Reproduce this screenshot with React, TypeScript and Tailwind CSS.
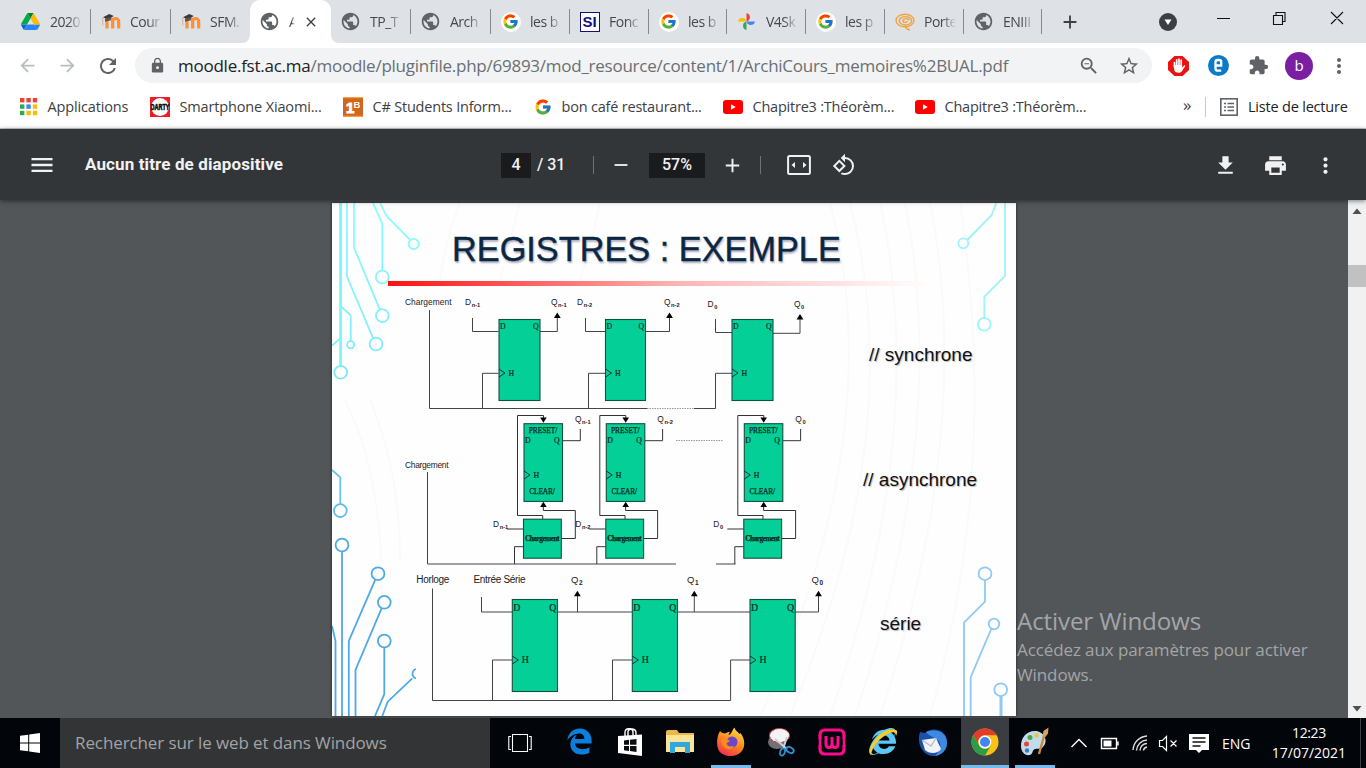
import React from "react";
import {
  MdAdd, MdArrowBack, MdArrowForward, MdClose, MdExtension, MdFileDownload, MdLock, MdMenu,
  MdMoreVert, MdPrint, MdPublic, MdRefresh, MdRemove, MdRotate90DegreesCcw, MdStarBorder, MdZoomOut,
} from "react-icons/md";
import { FcGoogle } from "react-icons/fc";
import { FaEdgeLegacy, FaInternetExplorer } from "react-icons/fa6";

const UI = "font-['Open_Sans','Noto_Sans',sans-serif]";

/* ---------- small drawings ---------- */

const Drive = () => (
  <svg width="19" height="17" viewBox="0 0 87.3 78">
    <path d="m6.6 66.85 3.85 6.65c.8 1.4 1.95 2.5 3.3 3.3l13.75-23.8h-27.5c0 1.55.4 3.1 1.2 4.5z" fill="#0066da" />
    <path d="m43.65 25-13.75-23.8c-1.35.8-2.5 1.9-3.3 3.3l-25.4 44a9.06 9.06 0 0 0 -1.2 4.5h27.5z" fill="#00ac47" />
    <path d="m73.55 76.8c1.35-.8 2.5-1.9 3.3-3.3l1.6-2.75 7.65-13.25c.8-1.4 1.2-2.95 1.2-4.5h-27.5l5.85 11.5z" fill="#2684fc" />
    <path d="m43.65 25 13.75-23.8c-1.35-.8-2.9-1.2-4.5-1.2h-18.5c-1.6 0-3.15.45-4.5 1.2z" fill="#00832d" />
    <path d="m59.8 53h-32.3l-13.75 23.8c1.35.8 2.9 1.2 4.5 1.2h50.8c1.6 0 3.15-.45 4.5-1.2z" fill="#2684fc" />
    <path d="m73.4 26.5-12.7-22c-.8-1.4-1.95-2.5-3.3-3.3l-13.75 23.8 16.15 28h27.45c0-1.55-.4-3.1-1.2-4.5z" fill="#ffba00" />
  </svg>
);
const Moodle = () => (
  <svg width="20" height="18" viewBox="0 0 20 18">
    <path d="M6 15.500V8.500a2.800 2.800 0 0 1 5.700 0V15.500M11.700 8.500a2.900 2.900 0 0 1 6 0V15.500" fill="none" stroke="#f7923a" strokeWidth="3.200" />
    <path d="M2 4.200 8.200 1l4.600 2-6 3.600z" fill="#3d3a38" />
    <path d="M4 5.500v3.200c2-.6 4-.8 5.600-1.400l.6-3z" fill="#5b5450" />
    <path d="M1.700 4.300v8" stroke="#c9b2a0" strokeWidth="1" />
  </svg>
);
const Globe = () => <MdPublic size={21} color="#5f6368" />;
const GoogleDisc = () => (
  <span className="flex h-5 w-5 items-center justify-center rounded-full bg-white"><FcGoogle size={17} /></span>
);
const SiLogo = () => (
  <span className="flex h-5 w-5 shrink-0 items-center justify-center border-[1.5px] border-[#12127a] bg-white">
    <span className="font-['Liberation_Sans',sans-serif] text-[15px] font-bold leading-none text-[#12127a]">SI</span>
  </span>
);
const Photos = () => (
  <svg width="19" height="19" viewBox="0 0 20 20">
    <path d="M10 10V1a5 4.7 0 0 1 0 9z" fill="#ea4335" /><path d="M10 10h9a4.6 4.6 0 0 1-9 0z" fill="#4285f4" />
    <path d="M10 10v9a4.6 4.6 0 0 1 0-9z" fill="#34a853" /><path d="M10 10H1a4.6 4.6 0 0 1 9 0z" fill="#fbbc04" />
  </svg>
);
const Swirl = () => (
  <svg width="20" height="18" viewBox="0 0 20 18" fill="none" stroke="#f2a33c" strokeWidth="1.4">
    <ellipse cx="10" cy="7.5" rx="9" ry="6.3" /><ellipse cx="10.5" cy="7.8" rx="6.2" ry="4.2" />
    <path d="M14 7.5c0-2.5-6-2.6-6 .4 0 2 4 2 4 .2M10 13.5c1 2.5 3 3 5 3.500" />
  </svg>
);
const YouTube = () => (
  <svg width="20" height="14" viewBox="0 0 20 14"><rect width="20" height="14" rx="3" fill="#f00" /><path d="M8 4.2v5.600L12.700 7z" fill="#fff" /></svg>
);

/* ---------- tabs ---------- */

const tabs: { icon: React.ReactNode; label: string; w: string; active?: boolean; bar?: boolean }[] = [
  { icon: <Drive />, label: "2020", w: "w-[80px]", bar: true },
  { icon: <Moodle />, label: "Cour", w: "w-[80px]", bar: true },
  { icon: <Moodle />, label: "SFM.", w: "w-[79px]" },
  { icon: <Globe />, label: "A", w: "w-[81px]", active: true },
  { icon: <Globe />, label: "TP_T", w: "w-[80px]", bar: true },
  { icon: <Globe />, label: "Arch", w: "w-[80px]", bar: true },
  { icon: <GoogleDisc />, label: "les b", w: "w-[79px]", bar: true },
  { icon: <SiLogo />, label: "Fonc", w: "w-[79px]", bar: true },
  { icon: <GoogleDisc />, label: "les b", w: "w-[78px]", bar: true },
  { icon: <Photos />, label: "V4Sk", w: "w-[79px]", bar: true },
  { icon: <GoogleDisc />, label: "les p", w: "w-[79px]", bar: true },
  { icon: <Swirl />, label: "Porte", w: "w-[79px]", bar: true },
  { icon: <Globe />, label: "ENIII", w: "w-[78px]", bar: true },
];

const Tabs = () => (
  <div className="flex h-[43px] items-end bg-[#dee1e6] pl-[11px]">
    {tabs.map((t, i) => (
      <div
        key={i}
        className={`relative flex h-[43px] shrink-0 items-center pl-[9px] ${t.w} ${t.active ? "rounded-t-[10px] bg-white" : ""}`}
      >
        <span className="flex w-[21px] shrink-0 justify-center">{t.icon}</span>
        <span
          className={`ml-[9px] whitespace-nowrap text-[14px] tracking-[-0.5px] text-[#45494d] ${t.active ? "w-[9px] [mask-image:linear-gradient(to_right,#000_30%,transparent_65%)]" : "w-[33px] [mask-image:linear-gradient(to_right,#000_55%,transparent_98%)]"}`}
        >
          {t.label}
        </span>
        {t.active && <MdClose size={16} className="ml-[5px] shrink-0 text-[#3c4043]" />}
        {t.bar && <span className="ml-auto h-[25px] w-px bg-[#85898e]" />}
        {t.active && (
          <svg className="absolute -left-2 bottom-0 h-2 w-[97px]" viewBox="0 0 97 8" fill="#fff">
            <path d="M0 8A8 8 0 0 0 8 0V8zM97 8A8 8 0 0 1 89 0V8z" />
          </svg>
        )}
      </div>
    ))}
    <div className="flex h-[43px] flex-1 items-center">
      <MdAdd size={22} className="ml-[17px] text-[#3c4043]" />
      <svg className="ml-[78px]" width="18" height="18" viewBox="0 0 18 18"><circle cx="9" cy="9" r="9" fill="#3c4043" /><path d="M5.500 6.500h7L9 12z" fill="#fff" /></svg>
      <svg className="mb-[8px] ml-[39px]" width="130" height="14" viewBox="0 0 130 14" fill="none" stroke="#111" strokeWidth="1.100">
        <path d="M1 7.500h13M57.500 4.500h9v9h-9zM60 4V1.500h9v9h-2.500M115 1l12 12M127 1l-12 12" />
      </svg>
    </div>
  </div>
);

/* ---------- address bar and bookmarks ---------- */

const Toolbar = () => (
  <div className="flex h-[45px] items-center bg-white">
    <MdArrowBack size={21} className="ml-[17px] text-[#b9bcbf]" />
    <MdArrowForward size={21} className="ml-[19px] text-[#b9bcbf]" />
    <MdRefresh size={24} className="ml-[18px] text-[#5f6368]" />
    <div className="ml-[15px] flex h-[35px] w-[1017px] items-center rounded-full bg-[#f1f3f4]">
      <MdLock size={17} className="ml-[14px] shrink-0 text-[#5f6368]" />
      <span className="ml-[12px] w-[860px] whitespace-nowrap text-[17px] tracking-[-0.25px] text-[#6b6f73]">
        <span className="text-[#202124]">moodle.fst.ac.ma</span>
        /moodle/pluginfile.php/69893/mod_resource/content/1/ArchiCours_memoires%2BUAL.pdf
      </span>
      <MdZoomOut size={22} className="ml-[40px] shrink-0 text-[#5f6368]" />
      <MdStarBorder size={22} className="ml-[18px] shrink-0 text-[#5f6368]" />
    </div>
    <svg className="ml-[16px]" width="21" height="20" viewBox="0 0 21 20">
      <path d="M6.500 0h8L21 6v8l-6.500 6h-8L0 14V6z" fill="#ed1212" />
      <path d="M6.500 11V6.500M8.700 10V3.800M11 10V3.200M13.200 10V4.200" stroke="#fff" strokeWidth="1.700" strokeLinecap="round" />
      <path d="M5.700 9h8.400v2.500l2-2c.9-.5 1.300.3.9.9l-3.300 5.100c-1.300 1.700-6 1.700-7.200-.5z" fill="#fff" />
    </svg>
    <svg className="ml-[19px]" width="21" height="21" viewBox="0 0 21 21">
      <circle cx="10.500" cy="10.500" r="10.500" fill="#0d7ac7" />
      <path d="M8.200 10.500h5V6.700c0-1.200-.8-1.700-2-1.700H9.800C8.400 5 7.500 5.600 7.500 7v6.500c0 1.500 1 2.200 2.300 2.200h3.400" fill="none" stroke="#fff" strokeWidth="2.300" />
    </svg>
    <MdExtension size={21} className="ml-[19px] text-[#5f6368]" />
    <span className="ml-[16px] flex h-7 w-7 items-center justify-center rounded-full bg-[#7b1fa2] pb-px text-[15px] text-white">b</span>
    <MdMoreVert size={24} className="ml-[14px] text-[#5f6368]" />
  </div>
);

const dots = ["#ea4335", "#ea4335", "#ea4335", "#34a853", "#4285f4", "#fbbc04", "#34a853", "#fbbc04", "#fbbc04"];

const Bookmark = ({ icon, label, w, track }: { icon: React.ReactNode; label: string; w: string; track: string }) => (
  <div className={`flex shrink-0 items-center gap-[9.5px] whitespace-nowrap ${w}`}>
    {icon}
    <span className={track}>{label}</span>
  </div>
);

const Bookmarks = () => (
  <div className="flex h-[41px] items-center border-b border-[#c9ccd0] bg-white pb-[3px] pl-5 text-[14.5px] text-[#3c4043]">
    <Bookmark
      w="w-[130px]"
      track="tracking-[-0.15px]"
      label="Applications"
      icon={
        <svg width="18" height="18" viewBox="0 0 18 18">
          {dots.map((c, i) => <rect key={i} x={(i % 3) * 6.400} y={Math.floor(i / 3) * 6.400} width="4.400" height="4.400" fill={c} />)}
        </svg>
      }
    />
    <Bookmark
      w="w-[193px]"
      track="tracking-[-0.15px]"
      label="Smartphone Xiaomi..."
      icon={
        <svg width="20" height="20" viewBox="0 0 20 20">
          <rect width="20" height="20" fill="#ee1c24" /><circle cx="10" cy="10" r="9" fill="#fff" />
          <text x="0.500" y="13.200" textLength="19" lengthAdjust="spacingAndGlyphs" fontFamily="Liberation Sans" fontWeight="bold" fontSize="8.500" stroke="#111" strokeWidth=".6">DARTY</text>
        </svg>
      }
    />
    <Bookmark
      w="w-[191px]"
      track="tracking-[-0.2px]"
      label="C# Students Inform..."
      icon={
        <svg width="20" height="20" viewBox="0 0 20 20">
          <rect width="20" height="20" fill="#d4651c" /><path d="M0 .6h20M0 19.400h20" stroke="#f0a040" strokeWidth="1.200" />
          <text x="3" y="16" fontFamily="Liberation Sans" fontWeight="bold" fontSize="15" fill="#fff" stroke="#fff" strokeWidth="1">1</text>
          <text x="10.500" y="10.500" fontFamily="Liberation Sans" fontWeight="bold" fontSize="9.500" fill="#fff">B</text>
        </svg>
      }
    />
    <Bookmark w="w-[189px]" track="tracking-[-0.2px]" label="bon café restaurant..." icon={<FcGoogle size={18} />} />
    <Bookmark w="w-[192px]" track="tracking-[-0.22px]" label="Chapitre3 :Théorèm..." icon={<YouTube />} />
    <Bookmark w="w-[220px]" track="tracking-[-0.22px]" label="Chapitre3 :Théorèm..." icon={<YouTube />} />
    <span className="ml-[48px] w-[22px] pb-1 text-[17px]">»</span>
    <span className="h-5 w-px bg-[#c6c9cd]" />
    <svg className="ml-[14px] shrink-0" width="18" height="18" viewBox="0 0 18 18" fill="none" stroke="#5f6368" strokeWidth="1.600">
      <rect x=".8" y=".8" width="16.400" height="16.400" /><path d="M4 5.500h2M7.500 5.500h6.500M4 9h2M7.500 9h6.500M4 12.500h2M7.500 12.500h6.500" />
    </svg>
    <span className="ml-[10px] whitespace-nowrap tracking-[-0.2px] text-[#202124]">Liste de lecture</span>
  </div>
);

/* ---------- PDF toolbar ---------- */

const PdfBar = () => (
  <div className="relative z-10 flex h-[71px] items-center bg-[#323639] pt-px font-['Roboto',sans-serif] text-[16px] font-medium text-[#f1f1f1] shadow-[0_1px_5px_rgba(0,0,0,0.5)]">
    <MdMenu size={28} className="ml-[28px]" />
    <span className="ml-[29px] w-[416px] text-[17px] font-bold tracking-[0.12px]">Aucun titre de diapositive</span>
    <span className="flex h-[25px] w-[30px] items-center justify-center bg-[#191b1c]">4</span>
    <span className="ml-[6px] w-[56px]">/ 31</span>
    <span className="h-[18px] w-px bg-[#6f7274]" />
    <MdRemove size={22} className="ml-[16px]" />
    <span className="ml-[17px] flex h-[25px] w-[56px] items-center justify-center bg-[#191b1c]">57%</span>
    <MdAdd size={23} className="ml-[16px]" />
    <span className="ml-[16px] h-[18px] w-px bg-[#6f7274]" />
    <svg className="ml-[26px]" width="24" height="20" viewBox="0 0 24 20">
      <rect x="1.100" y="1.100" width="21.800" height="17.800" rx="1.500" fill="none" stroke="#f1f1f1" strokeWidth="2" />
      <path d="M8 7v6L4.500 10zM16 7v6l3.500-3z" fill="#f1f1f1" />
    </svg>
    <MdRotate90DegreesCcw size={24} className="ml-[21px]" />
    <MdFileDownload size={25} className="ml-[357px]" />
    <MdPrint size={25} className="ml-[25px]" />
    <MdMoreVert size={25} className="ml-[25px]" />
  </div>
);

/* ---------- slide ---------- */

const G = "#04cf97";
const up = (x: number, y: number) => `M${x - 3.400} ${y + 5.500}h6.800l-3.400-5.500z`;

const Lbl = ({ x, y, t, s, fs = 8.400 }: { x: number; y: number; t: string; s: string; fs?: number }) => (
  <text x={x} y={y} fontSize={fs} fill="#222">
    {t}
    <tspan dy="2" dx=".6" fontSize={fs * 0.68} fontWeight="bold">{s}</tspan>
  </text>
);

const Box = ({ x, y, w, h }: { x: number; y: number; w: number; h: number }) => (
  <rect x={x} y={y} width={w} height={h} fill={G} stroke="#14503e" strokeWidth="1.100" />
);

const Flip = ({ x, y, w, h, hy, dy, qx, fs }: { x: number; y: number; w: number; h: number; hy: number; dy: number; qx: number; fs: number }) => (
  <g>
    <Box x={x} y={y} w={w} h={h} />
    <path d={`M${x} ${hy - 4}l6 4-6 4`} fill="none" stroke="#123" strokeWidth=".9" />
    <g fontFamily="Liberation Serif" fontSize={fs} fill="#06291f" stroke="#06291f" strokeWidth=".2">
      <text x={x + 1} y={dy}>D</text>
      <text x={qx} y={dy}>Q</text>
      <text x={x + 9.500} y={hy + 2.800}>H</text>
    </g>
  </g>
);

const asyncCells = [
  { dx: 0, s: "n-1" },
  { dx: 82.300, s: "n-2" },
  { dx: 220.300, s: "0" },
];

const Circuit = () => (
  <svg className="absolute left-0 top-0 h-[514px] w-[684px]" viewBox="332 203 684 514" fontFamily="Liberation Sans">
    <defs>
      <linearGradient id="bar"><stop offset="0" stopColor="#f11" /><stop offset=".53" stopColor="#ffb4b4" /><stop offset="1" stopColor="#fff" /></linearGradient>
      <linearGradient id="tl" gradientUnits="userSpaceOnUse" x1="0" y1="203" x2="0" y2="380"><stop offset="0" stopColor="#8dfdff" /><stop offset="1" stopColor="#7ce8f7" /></linearGradient>
    </defs>
    <g fill="none" stroke="#fafafb" strokeWidth="2">
      <path d="M460 203Q445 240 440 280M520 203Q510 240 500 280M600 203Q590 250 580 280M830 203Q890 430 760 716M850 203Q910 430 790 716M880 203Q930 430 830 716M905 203Q950 430 855 716M930 203Q975 430 880 716M960 203Q1000 470 930 716M345 400Q390 490 380 640M370 400Q400 470 400 560" />
    </g>
    <g fill="none" stroke="url(#tl)" strokeWidth="1.800">
      <path d="M340.600 203V365.500h.02" stroke="#86f4fb" strokeWidth="3" />
      <path d="M347 203v73.500L373 338M354 203v44.700l25.800 61.800M373 203l9.300 21V270M380.300 203l6 12.700 23.600 24M341.300 306.700l9.400 8.600V341M332 345.700l8.300-7.400" />
      <circle cx="340.700" cy="372.300" r="6.400" /><circle cx="376" cy="344" r="6.400" /><circle cx="382.300" cy="315.600" r="6.400" />
      <circle cx="382.300" cy="277" r="6.400" /><circle cx="413.700" cy="244" r="5.100" /><circle cx="350.700" cy="344.700" r="3.600" />
    </g>
    <g fill="none" stroke="#9cf3fc" strokeWidth="1.800">
      <path d="M996.300 203l-4.600 12-24.400 25M1005 203v73l-20.700 20.700v21" />
      <circle cx="963.300" cy="243.300" r="5" /><circle cx="984.300" cy="324.300" r="6.400" />
    </g>
    <g fill="none" stroke="#4fa9e6" strokeWidth="1.800">
      <path d="M332 470l8.300 7.300V504" stroke="#66c3ee" /><circle cx="340.300" cy="510.600" r="6.400" stroke="#5fbbea" />
      <circle cx="342" cy="545" r="6.400" />
      <path d="M342 551.500V716M332 626l3.500 15v75M348.800 716v-75L375.300 579.700M355.500 716v-46L381.600 608.300M375 716l9.300-22v-46.500M382.300 716l5.400-14.300 24.600-23.400M416 669a5 5 0 0 0 0 9.500" />
      <circle cx="378" cy="573.700" r="6.400" /><circle cx="384.300" cy="602.300" r="6.400" /><circle cx="384.300" cy="641" r="6.400" />
    </g>
    <g fill="none" stroke="#8fcaf2" strokeWidth="1.800">
      <path d="M985 580v21.700l-21 21V716M991.200 629.200l-20.500 48V716" /><path d="M1001 696v20" strokeWidth="3" />
      <circle cx="985" cy="573.700" r="6.400" /><circle cx="994" cy="624" r="5.300" /><circle cx="1000.700" cy="689.700" r="6.400" />
    </g>
    <rect x="388" y="281" width="547" height="5" fill="url(#bar)" />

    {/* synchronous parallel register */}
    <g fill="none" stroke="#444" strokeWidth="1">
      <path d="M429.500 310v98.500H647M482.500 408.500V373.300h16M588.500 408.500V373.300h17M694 408.500h21.500V373.300H732" />
      <path d="M472.500 318v13.500h26M585.500 318v13.500h20M715.500 319v13.500H732M540 331.500h17.300V316M645 331.500h24.500V316M773 333.300h27V318" />
      <path d="M647 408.500h47M676 440.500h47" stroke="#999" strokeDasharray="1.500 1" />
    </g>
    <path d={up(557.3, 312.500) + up(669.5, 312.500) + up(800, 314)} fill="#000" />
    <text x="405" y="305.300" fontSize="8.400" fill="#222" textLength="46.500">Chargement</text>
    <Lbl x={465} y={305.300} t="D" s="n-1" /><Lbl x={551} y={305.300} t="Q" s="n-1" />
    <Lbl x={577} y={305.300} t="D" s="n-2" /><Lbl x={664} y={305.300} t="Q" s="n-2" />
    <Lbl x={707.500} y={307.300} t="D" s="0" /><Lbl x={794} y={307.300} t="Q" s="0" />
    {[499, 605.500, 732].map((x) => (
      <Flip key={x} x={x} y={319.500} w={x === 605.500 ? 40 : 41} h={81} hy={373} dy={329} qx={x + (x === 605.500 ? 33 : 34)} fs={7.800} />
    ))}

    {/* asynchronous parallel register */}
    <text x="405" y="468.300" fontSize="8.400" fill="#222" textLength="43.500">Chargement</text>
    <path d="M427.500 472v92H676M716 564h19.500" fill="none" stroke="#444" />
    {asyncCells.map(({ dx, s }) => (
      <g key={s} transform={`translate(${dx} 0)`}>
        <g fill="none" stroke="#333" strokeWidth="1">
          <path d="M542.700 519v-3.500H517.500v-100h26v3M562.300 440.700h18V429M543.300 506v4.500H575.300v28H561M507 529h16.500M523.500 546.700h-9V564" />
        </g>
        <path d="M540.100 417.500h6.600l-3.300 5.300zM540.100 507h6.600l-3.300-5.200z" fill="#000" />
        <Flip x={524} y={423.700} w={38.500} h={77.700} hy={475} dy={443} qx={554} fs={7.800} />
        <Box x={523.500} y={519.200} w={37.800} h={39} />
        <g fontFamily="Liberation Serif" fontSize="7.400" fill="#06291f" stroke="#06291f" strokeWidth=".25">
          <text x="528.700" y="432.800" textLength="28.500">PRESET/</text>
          <text x="529.300" y="493.800" textLength="25.500">CLEAR/</text>
          <text x="525" y="541.300" fontWeight="bold" textLength="34.500">Chargement</text>
        </g>
        <Lbl x={575} y={422.300} t="Q" s={s} />
        <Lbl x={493} y={526.700} t="D" s={s} />
      </g>
    ))}

    {/* serial register */}
    <g fill="none" stroke="#444" strokeWidth="1">
      <path d="M432.500 588.500v112H730.600V660H750M492.500 700.500V660h20M612.500 700.500V660h20M481.500 597v15h31M557.500 612H632.500M677.500 612H750M795 612h23.500V596M577.500 612V596M694.300 612V596" />
    </g>
    <path d={up(577.400, 590.800) + up(694.300, 590.800) + up(818.500, 590.800)} fill="#000" />
    <text x="416.300" y="582.700" fontSize="10" fill="#222" textLength="33">Horloge</text>
    <text x="473.500" y="582.700" fontSize="10" fill="#222" textLength="52">Entrée Série</text>
    <Lbl x={571} y={582.700} t="Q" s="2" fs={9.500} /><Lbl x={687} y={582.700} t="Q" s="1" fs={9.500} /><Lbl x={811.500} y={582.700} t="Q" s="0" fs={9.500} />
    {[512.300, 632.300, 750].map((x) => (
      <Flip key={x} x={x} y={599.500} w={45.200} h={92} hy={660} dy={611} qx={x + 37} fs={9.800} />
    ))}
  </svg>
);

const caption = "absolute whitespace-nowrap text-[19px] leading-none text-[#111] [text-shadow:1px_1px_1px_#bbb]";

const Viewer = () => (
  <div className="flex h-[518px] bg-[#525659]">
    <div className="ml-[332px] mt-[3px] h-[514px] w-[684px] shrink-0">
      <div className="relative h-[513px] overflow-hidden bg-[#fefefe] font-['Liberation_Sans',sans-serif] shadow-[0_0_3px_rgba(0,0,0,0.6)]">
        <Circuit />
        <h1 className="absolute left-[120px] top-[27px] whitespace-nowrap text-[34.3px] leading-[38px] text-[#0b2641] [-webkit-text-stroke:0.4px_#0b2641] [text-shadow:1px_2px_2px_#aab]">REGISTRES : EXEMPLE</h1>
        <p className={`left-[537px] top-[142px] ${caption}`}>// synchrone</p>
        <p className={`left-[531px] top-[267px] ${caption}`}>// asynchrone</p>
        <p className={`left-[548px] top-[411px] ${caption}`}>série</p>
      </div>
    </div>
    <div className="relative flex-1">
      <div className="absolute left-[1px] top-[404px] whitespace-nowrap text-[#a3a5a7]">
        <div className="text-[24.2px] leading-[33px] tracking-[-0.15px]">Activer Windows</div>
        <div className="text-[17px] leading-[25px] tracking-[-0.1px]">Accédez aux paramètres pour activer<br />Windows.</div>
      </div>
    </div>
    <div className="flex w-[18px] flex-col items-center bg-[#f1f1f1]">
      <svg width="18" height="22" viewBox="0 0 18 22"><path d="M4.500 14h9L9 8.500z" fill="#505050" /></svg>
      <div className="mt-[43px] h-[22px] w-[18px] bg-[#c1c1c1]" />
      <svg className="mt-auto" width="18" height="18" viewBox="0 0 18 18"><path d="M4.500 6h9L9 11.500z" fill="#505050" /></svg>
    </div>
  </div>
);

/* ---------- taskbar ---------- */

const Store = () => (
  <svg width="28" height="30" viewBox="0 0 28 30">
    <path d="M9 9V5.500C9 .5 17 .5 17 5.500V8M12 9V4.500c1-4 8-3 8 1.500V8" fill="none" stroke="#fff" strokeWidth="1.400" />
    <path d="M2 9l24-1.500V29L2 26z" fill="#fff" /><path d="M8 13.500l5-.7v5H8zM14 12.700l6.500-.8v5.900H14zM8 19h5v5l-5-.7zM14 19h6.500v6l-6.500-.9z" fill="#0a0c10" />
  </svg>
);
const Folder = () => (
  <svg width="28" height="26" viewBox="0 0 28 26">
    <path d="M0 3q0-2 2-2h9l2 3h15v18H0z" fill="#e8b84a" /><path d="M0 6h28v17H0z" fill="#fbe39a" /><path d="M4 24V13h20v11h-5v-6H9v6z" fill="#2fa8e0" />
  </svg>
);
const Firefox = () => (
  <svg width="30" height="30" viewBox="0 0 30 30">
    <defs><linearGradient id="ff" x1=".8" y1="0" x2=".3" y2="1"><stop offset="0" stopColor="#ffe24a" /><stop offset=".5" stopColor="#ff8a1e" /><stop offset="1" stopColor="#f0304e" /></linearGradient></defs>
    <path d="M4 4c1 1.500 3 2.500 5 2.500 2-1.500 4-1.500 5-1.500-1 1-1.500 2-1.500 3C16 7 16 3 18.500.5c.5 3 3 4 5 6.500l1-1c4 5 5 12 2 17-5 8-19 8-24 0C0 17 1 9 4 4z" fill="url(#ff)" />
    <circle cx="16" cy="15" r="5.500" fill="#6b46c8" /><path d="M5 13c3-2 7-1 9 1l-4 2.500c1 3 5 4 8 2-2 6-12 5-13-5.500z" fill="#ff8a1e" />
  </svg>
);
const Snip = () => (
  <svg width="30" height="30" viewBox="0 0 30 30">
    <ellipse cx="10" cy="15" rx="9" ry="7" fill="#6f7175" /><ellipse cx="12.500" cy="8.500" rx="10" ry="7" fill="#f4f4f6" stroke="#d23b3b" strokeWidth="1.100" strokeDasharray="3 1" />
    <path d="M8 12l12 10M20 10l-4 12" stroke="#c6d3dd" strokeWidth="2" /><g fill="none" stroke="#2f8fd0" strokeWidth="1.800"><ellipse cx="23" cy="23" rx="4" ry="2.600" transform="rotate(30 23 23)" /><ellipse cx="15.500" cy="25" rx="2.300" ry="3.700" transform="rotate(20 15.500 25)" /></g>
  </svg>
);
const Wamp = () => (
  <svg width="28" height="28" viewBox="0 0 28 28" fill="none" stroke="#ff0a8c">
    <path d="M2 11V7q0-5 5-5h14q5 0 5 5v4M2 17v4q0 5 5 5h14q5 0 5-5v-4" strokeWidth="3.200" />
    <path d="M8 8v8q0 3.500 3 3.500t3-3.500V9v7q0 3.500 3 3.500t3-3.500V8" strokeWidth="3" /><path d="M2 10v8M26 10v8" strokeWidth="2.600" />
  </svg>
);
const Ie = () => (
  <span className="relative flex h-[30px] w-[30px] items-center justify-center">
    <FaInternetExplorer size={27} color="#5cc8f5" />
    <svg className="absolute inset-0" width="30" height="30" viewBox="0 0 30 30"><path d="M3 28C-3 22 14-2 28 3c2 1 1 4 0 6 0-3-2-5-6-3C12 10 4 20 3 28z" fill="#f8cb2e" /></svg>
  </span>
);
const Bird = () => (
  <svg width="30" height="30" viewBox="0 0 30 30">
    <path d="M2 5l5 1C12 0 29 1 29 15c0 8-6 14-13 14C5 29-2 17 2 5z" fill="#1b4fa8" /><path d="M8 5c10-4 21 0 21 11 0 8-6 12-12 13 6-6 8-14 0-18C13 9 10 8 8 5z" fill="#3d8be0" />
    <path d="M4 13l14-2 5 11c-3 5-12 5-16 1z" fill="#f1f3f6" /><path d="M4 13l9 6 5-8" fill="none" stroke="#b4bcc8" strokeWidth="1.300" />
  </svg>
);
const Chrome = () => (
  <svg width="28" height="28" viewBox="-14 -14 28 28">
    <circle r="13.500" fill="#fbc116" />
    <path d="M-11.700-6.800A13.500 13.500 0 0 1 11.700-6.800H0A6.800 6.800 0 0 0-5.900 3.400z" fill="#e33b2e" />
    <path d="M-11.700-6.800A13.500 13.500 0 0 0 0 13.500L5.900 3.400A6.800 6.800 0 0 1-5.900 3.400z" fill="#2a9d48" />
    <circle r="6.400" fill="#fff" /><circle r="5" fill="#4285f4" />
  </svg>
);
const Paint = () => (
  <svg width="30" height="30" viewBox="0 0 30 30">
    <path d="M15 4C6 4 1 11 1 19c0 6 4 10 9 9 3-1 2-5 5-6 3-1 5 1 8-2 6-6 1-16-8-16z" fill="#c3dcec" />
    <circle cx="6.500" cy="17" r="2.500" fill="#e0483e" /><circle cx="10" cy="10.500" r="2.500" fill="#47a845" /><circle cx="16.500" cy="8.500" r="2.300" fill="#e9c63a" /><circle cx="7" cy="23.500" r="2.200" fill="#3b78c6" />
    <path d="M24 9l-5 18" stroke="#c98a3c" strokeWidth="2.400" /><path d="M22.500 9l1-5 5-3.500-.5 6-2.500 3.500z" fill="#d8a05c" />
  </svg>
);

const apps: { node: React.ReactNode; line?: boolean; active?: boolean }[] = [
  { node: <FaEdgeLegacy size={27} color="#0a7fdc" /> },
  { node: <Store /> },
  { node: <Folder /> },
  { node: <Firefox />, line: true },
  { node: <Snip /> },
  { node: <Wamp /> },
  { node: <Ie /> },
  { node: <Bird /> },
  { node: <Chrome />, line: true, active: true },
  { node: <Paint />, line: true },
];

const Taskbar = () => (
  <div className="flex h-[50px] items-stretch bg-[#020509] text-white">
    <div className="flex w-[60px] items-center justify-center">
      <svg width="20" height="20" viewBox="0 0 20 20" fill="#fff"><path d="M0 2.800 8.200 1.700V9.500H0zM9.200 1.500 20 0v9.500H9.200zM0 10.500h8.200v7.800L0 17.200zM9.200 10.500H20V20L9.200 18.500z" /></svg>
    </div>
    <div className="flex w-[430px] items-center bg-[#333436] pl-[15px] text-[17px] tracking-[-0.1px] text-[#a2a3a5]">Rechercher sur le web et dans Windows</div>
    <div className="mr-[4px] flex w-[60px] items-center justify-center">
      <svg width="24" height="20" viewBox="0 0 24 20" fill="none" stroke="#fff" strokeWidth="1.100"><path d="M4.500 1.500h15v17h-15zM3 3.500H.8v13H3M21 3.500h2.200v13H21" /></svg>
    </div>
    {apps.map((a, i) => (
      <div key={i} className={`flex shrink-0 flex-col items-center ${a.active ? "ml-[2px] w-[48.6px] bg-[#3a3d41]" : "w-[50.6px]"}`}>
        <div className="flex flex-1 items-center">{a.node}</div>
        <div className={`h-[3px] ${a.active ? "w-full" : "w-10"} ${a.line ? "bg-[#76b9ed]" : ""}`} />
      </div>
    ))}
    <svg className="ml-[8px] shrink-0" width="146" height="50" viewBox="1068 718 146 50" fill="none" stroke="#fff" strokeWidth="1.400">
      <path d="M1071.500 747l7.500-7.500 7.500 7.500" />
      <path d="M1101.500 738.500h15v10h-15zM1118 741.500v4" /><path d="M1103.500 740.500h8v6h-8z" fill="#fff" stroke="none" />
      <path d="M1133 750a15 15 0 0 1 14-14M1136.500 750.500a11 11 0 0 1 10.500-10.500M1140 750.500a7 7 0 0 1 7-7M1143.500 750.500a4 4 0 0 1 3.500-3.500" stroke="#ddd" />
      <path d="M1159.500 740.500h3l4-4v14l-4-4h-3zM1170.500 740.500l6 6M1176.500 740.500l-6 6" strokeWidth="1.200" />
      <path d="M1189 734h20v16h-7l-3 3-3-3h-7z" fill="#fff" stroke="none" /><path d="M1192.500 738h13M1192.500 742h13M1192.500 746h8" stroke="#111" />
    </svg>
    <span className="ml-[8px] w-[40px] self-center text-[14px] tracking-[0px]">ENG</span>
    <div className="flex w-[94px] flex-col items-center justify-center whitespace-nowrap pb-px text-[14px] leading-[20px]">
      <span className="tracking-[-0.4px]">12:23</span><span className="tracking-[0px]">17/07/2021</span>
    </div>
    <span className="ml-auto mr-[5px] w-px bg-[#3c4045]" />
  </div>
);

export default function App() {
  return (
    <div className={`h-[768px] w-[1366px] overflow-hidden ${UI}`}>
      <Tabs />
      <Toolbar />
      <Bookmarks />
      <PdfBar />
      <Viewer />
      <Taskbar />
    </div>
  );
}
